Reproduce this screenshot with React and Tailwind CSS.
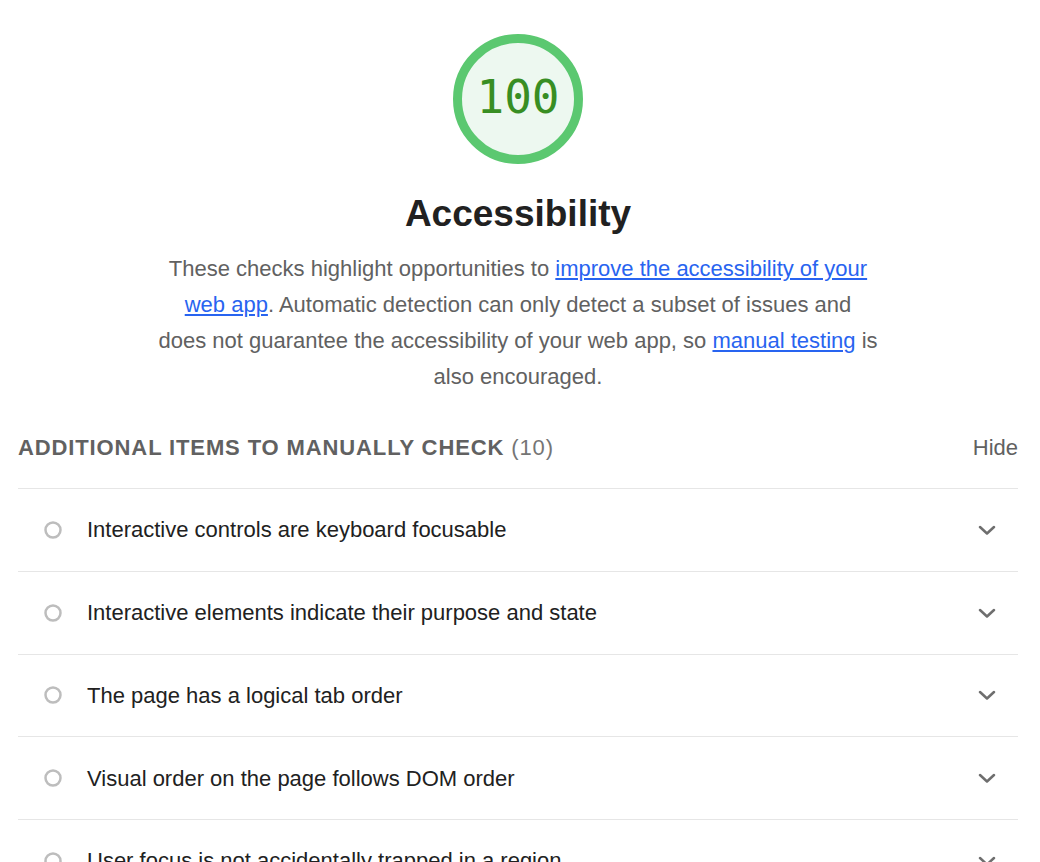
import React from 'react';

const items = [
  'Interactive controls are keyboard focusable',
  'Interactive elements indicate their purpose and state',
  'The page has a logical tab order',
  'Visual order on the page follows DOM order',
  'User focus is not accidentally trapped in a region',
  'The user\'s focus is directed to new content added to the page',
];

const Chevron = () => (
  <svg width="18" height="10" viewBox="0 0 18 10" fill="none">
    <path d="M2 2 L9 8.5 L16 2" stroke="#6e6e6e" strokeWidth="2.5" strokeLinecap="round" strokeLinejoin="round" />
  </svg>
);

const Dot = () => (
  <svg width="18" height="18" viewBox="0 0 18 18" fill="none">
    <circle cx="9" cy="9" r="7.5" stroke="#bdbdbd" strokeWidth="2.5" />
  </svg>
);

const App = () => {
  return (
    <div className="h-[862px] overflow-hidden bg-white pl-[18px] pr-[22px] font-['Liberation_Sans',Arial,sans-serif]">
      <div className="flex flex-col items-center">
        {/* score gauge */}
        <div className="mt-[34px] w-[130px] h-[130px] rounded-full border-[9px] border-[#5bc870] bg-[#edf8f0] flex items-center justify-center">
          <span className="font-['DejaVu_Sans_Mono',monospace] text-[46px] leading-none text-[#388e23] -mt-[4px]">100</span>
        </div>
        <h1 className="mt-[28px] text-[37px] leading-[43px] font-bold text-[#212121]">Accessibility</h1>
        <p className="mt-[16px] max-w-[720px] text-center text-[22px] leading-[36px] text-[#616161]">
          These checks highlight opportunities to{' '}
          <a href="#" className="text-[#2864f0] underline">improve the accessibility of your web app</a>. Automatic detection can only detect a subset of issues and does not guarantee the accessibility of your web app, so{' '}
          <a href="#" className="text-[#2864f0] underline">manual testing</a> is also encouraged.
        </p>
      </div>

      <div className="mt-[38px] flex items-center justify-between h-[28px]">
        <div className="text-[22px] uppercase tracking-[0.04em] text-[#616161]">
          <span className="font-bold">Additional items to manually check</span>{' '}
          <span className="text-[#757575]">(10)</span>
        </div>
        <button className="text-[22px] text-[#616161]">Hide</button>
      </div>

      <div className="mt-[27px]">
        {items.map((item, index) => (
          <div key={index} className="h-[82.75px] border-t border-[#e6e6e6] flex items-center pl-[26px] pr-[22px]">
            <Dot />
            <span className="ml-[25px] flex-1 text-[22px] text-[#212121]">{item}</span>
            <Chevron />
          </div>
        ))}
      </div>
    </div>
  );
};

export default App;
